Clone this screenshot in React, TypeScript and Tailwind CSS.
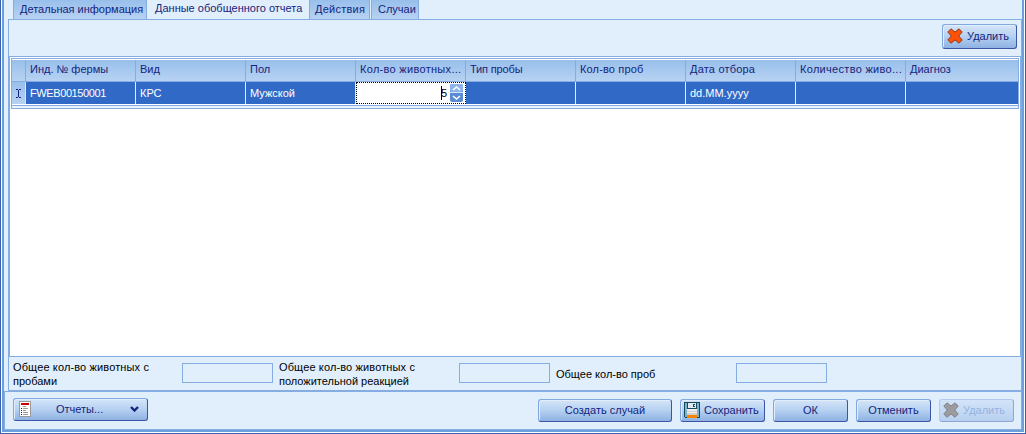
import React from "react";

const ink = "text-[#15247c]";

function Cross({ dead = false }: { dead?: boolean }) {
  return (
    <svg width="16" height="16" viewBox="0 0 16 16" className="shrink-0">
      <path
        d="M4 .8 .8 4 4.300 8 .8 12 4 15.200 8 11.900 12 15.200 15.200 12 11.700 8 15.200 4 12 .8 8 4.100Z"
        fill={dead ? "#9c9c9c" : "#ff5208"}
        stroke={dead ? "#7c8088" : "#8a3a1e"}
        strokeLinejoin="round"
      />
    </svg>
  );
}

function Floppy() {
  return (
    <svg width="16" height="16" viewBox="0 0 16 16" shapeRendering="crispEdges" className="shrink-0">
      <path d="M0 0h16v16H1l-1-1z" fill="#17495c" />
      <path d="M1 1h2v14H1zM13 1h2v14h-2z" fill="#79b4cb" />
      <path d="M4 1h8v5H4z" fill="#dfeaf0" />
      <path d="M9 2h2v3H9z" fill="#17495c" />
      <path d="M10 3h1v1h-1z" fill="#dfeaf0" />
      <path d="M3 7h10v6H3z" fill="#eeeeee" />
      <path d="M3 9h10v1H3zM3 11h10v2H3z" fill="#cfcfcf" />
      <path d="M3 13h10v3H3z" fill="#f58400" />
    </svg>
  );
}

function Sheet() {
  return (
    <svg width="12" height="16" viewBox="0 0 12 16" shapeRendering="crispEdges" className="shrink-0">
      <path d="M0 0h12v16H0z" fill="#9a9a9a" />
      <path d="M1 1h10v14H1z" fill="#fff" />
      <path d="M2 2h8v2H2z" fill="#cc0000" />
      <path d="M2 7h1v1H2zM2 9h1v1H2zM2 11h1v1H2zM2 13h1v1H2z" fill="#222" />
      <path d="M4 5h3v1H4zM4 7h5v1H4zM4 9h3v1H4zM4 11h5v1H4zM4 13h5v1H4z" fill="#999" />
    </svg>
  );
}

function Button({ className, disabled = false, children }: { className: string; disabled?: boolean; children: React.ReactNode }) {
  return (
    <button
      disabled={disabled}
      className={
        "flex shrink-0 items-center rounded-[3px] border bg-linear-to-b " +
        (disabled
          ? "border-t-[#b1cbee] border-l-[#b1cbee] border-r-[#8fa6d4] border-b-[#8fa6d4] from-[#d3e4f9] to-[#b8d0f0] text-[#94b3e2] "
          : "border-t-[#82a8e0] border-l-[#82a8e0] border-r-[#3c55a5] border-b-[#3c55a5] from-[#d5e5f8] via-[#b5d0f1] to-[#8fb2e3] shadow-[inset_1px_1px_0_#e2eefb] ") +
        className
      }
    >
      {children}
    </button>
  );
}

const columns: { title: string; value: string; spacing: string }[] = [
  { title: "Инд. № фермы", value: "FWEB00150001", spacing: "" },
  { title: "Вид", value: "КРС", spacing: "" },
  { title: "Пол", value: "Мужской", spacing: "" },
  { title: "Кол-во животных...", value: "", spacing: "tracking-[0.3px]" },
  { title: "Тип пробы", value: "", spacing: "tracking-[-0.15px]" },
  { title: "Кол-во проб", value: "", spacing: "tracking-[0.15px]" },
  { title: "Дата отбора", value: "dd.MM.yyyy", spacing: "tracking-[0.2px]" },
  { title: "Количество живо...", value: "", spacing: "tracking-[0.3px]" },
  { title: "Диагноз", value: "", spacing: "" },
];

const tab = "border-x border-[#86ade2] bg-linear-to-b from-[#98bfeb] to-[#b7d2f2] pt-[2px] ";

export default function App() {
  return (
    <div className={"flex h-[434px] w-[1026px] flex-col border-x border-b border-[#3c62ad] bg-white px-px pb-px font-['Liberation_Sans',Arial,sans-serif] text-[11px] leading-[14px] " + ink}>
      <div className="flex flex-1 flex-col border-x-2 border-b-2 border-[#6c9fdb] bg-[#e1effd]">
        <div className="flex h-[19px] shrink-0 pl-[9px] whitespace-nowrap">
          <div className={tab + "w-[134px] pl-[6px]"}>Детальная информация</div>
          <div className="w-[162px] pt-px pl-[8px]">Данные обобщенного отчета</div>
          <div className={tab + "w-[61px] pl-[5px] tracking-[0.25px]"}>Действия</div>
          <div className={tab + "ml-px w-[48px] pl-[6px]"}>Случаи</div>
        </div>
        <div className="ml-1 flex h-[372px] shrink-0 flex-col border border-[#86ade2]">
          <div className="flex h-9 shrink-0 justify-end pt-1 pr-1">
            <Button className="h-[25px] w-[75px] gap-1 pb-px pl-1"><Cross />Удалить</Button>
          </div>
          <div className="flex h-[301px] shrink-0 flex-col border border-[#86ade2] bg-white pt-px pl-px">
            <div className="flex h-[51px] w-[1008px] flex-col border border-[#86ade2] bg-[#eaf3fd]">
              <div className="flex h-[23px] shrink-0 border-t border-t-white border-b border-b-[#86ade2] bg-linear-to-b from-[#98bfeb] to-[#b7d2f2]">
                <div className="w-[14px] shrink-0 border-r border-[#86ade2]" />
                {columns.map((c, i) => (
                  <div key={c.title} className={(i === 8 ? "w-[112px] " : "w-[110px] border-r ") + "shrink-0 border-[#86ade2] pt-[2px] pl-1 whitespace-nowrap " + c.spacing}>{c.title}</div>
                ))}
              </div>
              <div className="flex h-[22px] shrink-0 bg-[#3169c6] text-white">
                <div className="flex w-[14px] shrink-0 items-center justify-center border-r border-[#d5e5f8] bg-linear-to-b from-[#98bfeb] to-[#b7d2f2]">
                  <svg width="5" height="9" viewBox="0 0 5 9" shapeRendering="crispEdges"><path d="M0 0h2v1H0zM3 0h2v1H3zM2 1h1v7H2zM0 8h2v1H0zM3 8h2v1H3z" fill="#15247c" /></svg>
                </div>
                {columns.map((c, i) =>
                  i === 3 ? (
                    <div key={c.title} className="flex w-[110px] shrink-0 items-center justify-end border border-dotted border-black bg-white pr-[2px] text-black">
                      <span className="h-[14px] w-px bg-black" />
                      <span className="mr-[3px] -ml-px">5</span>
                      <svg width="13" height="18" viewBox="0 0 13 18">
                        <rect width="13" height="18" rx="2" fill="#5a8ad4" />
                        <rect width="13" height="8" rx="2" fill="#8db4e7" />
                        <path d="M0 8.5h13" stroke="#d3e3f7" />
                        <path d="m3 6 3.500-3 3.500 3M3 12l3.500 3 3.500-3" fill="none" stroke="#fff" strokeWidth="1.500" />
                      </svg>
                    </div>
                  ) : (
                    <div key={c.title} className={(i === 8 ? "w-[112px] " : "w-[110px] border-r ") + "shrink-0 border-[#e1effd] pt-1 pl-1 " + (i === 0 ? "tracking-[-0.4px]" : "")}>{c.value}</div>
                  ),
                )}
              </div>
              <div className="h-px shrink-0 bg-white" />
              <div className="h-px shrink-0 bg-[#86ade2]" />
            </div>
          </div>
          <div className="flex flex-1 pt-[3px] pl-1 text-black">
            <div className="w-[169px]"><span className="tracking-[0.13px]">Общее кол-во животных с</span><br />пробами</div>
            <div className="mt-[3px] h-5 w-[91px] border border-[#86ade2]" />
            <div className="ml-[6px] w-[180px]"><span className="tracking-[0.13px]">Общее кол-во животных с</span><br />положительной реакцией</div>
            <div className="mt-[3px] h-5 w-[91px] border border-[#86ade2]" />
            <div className="ml-[6px] w-[180px] pt-[7px]">Общее кол-во проб</div>
            <div className="mt-[3px] h-5 w-[91px] border border-[#86ade2]" />
          </div>
        </div>
        <div className="flex flex-1 items-start border border-[#86ade2] pt-[6px] pl-2 whitespace-nowrap">
          <Button className="h-[23px] w-[135px] pb-px pl-[5px]">
            <Sheet />
            <span className="ml-[25px] w-[74px] text-left">Отчеты...</span>
            <svg width="9" height="6" viewBox="0 0 9 6"><path d="m1 1 3.500 3.500L8 1" fill="none" stroke="#15247c" strokeWidth="2.400" /></svg>
          </Button>
          <div className="mt-px ml-[390px] flex gap-2">
            <Button className="h-[23px] w-[134px] justify-center pb-px">Создать случай</Button>
            <Button className="h-[23px] w-[85px] gap-1 pb-px pl-[3px]"><Floppy />Сохранить</Button>
            <Button className="h-[23px] w-[75px] justify-center pb-px">ОК</Button>
            <Button className="h-[23px] w-[75px] justify-center pb-px">Отменить</Button>
            <Button disabled className="h-[23px] w-[75px] gap-1 pb-px pl-[3px]"><Cross dead />Удалить</Button>
          </div>
        </div>
      </div>
    </div>
  );
}
